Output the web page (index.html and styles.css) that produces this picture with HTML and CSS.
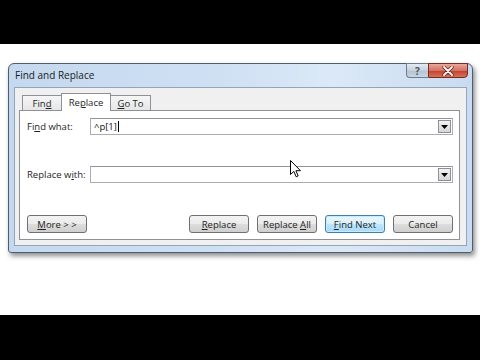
FILE: index.html
```html
<!DOCTYPE html>
<html>
<head>
<meta charset="utf-8">
<link rel="stylesheet" href="styles.css">
</head>
<body>
<div class="bar"></div>
<div class="stage">
  <div class="dialog">
    <div class="titlebar">
      <span class="title">Find and Replace</span>
      <div class="caption-btns">
        <div class="cap help">?</div>
        <div class="cap close">
          <svg width="12" height="10" viewBox="0 0 12 10"><path d="M2 1 L10 9 M10 1 L2 9" stroke="#5a1a14" stroke-width="3.2" stroke-linecap="round"/><path d="M2 1 L10 9 M10 1 L2 9" stroke="#fff" stroke-width="1.8" stroke-linecap="round"/></svg>
        </div>
      </div>
    </div>
    <div class="client">
      <div class="tabs">
        <div class="tab"><span>Fin<u>d</u></span></div>
        <div class="tab active"><span>Re<u>p</u>lace</span></div>
        <div class="tab"><span><u>G</u>o To</span></div>
      </div>
      <div class="panel">
        <div class="row">
          <span class="label">Fi<u>n</u>d what:</span>
          <div class="combo"><span class="value">^p[1]</span><span class="caret"></span><div class="drop"><svg width="7" height="4" viewBox="0 0 7 4"><path d="M0 0 H7 L3.5 4 Z" fill="#000"/></svg></div></div>
        </div>
        <div class="row row2">
          <span class="label">Replace w<u>i</u>th:</span>
          <div class="combo"><span class="value"></span><div class="drop"><svg width="7" height="4" viewBox="0 0 7 4"><path d="M0 0 H7 L3.5 4 Z" fill="#000"/></svg></div></div>
        </div>
        <div class="buttons">
          <div class="btn"><span><u>M</u>ore &gt; &gt;</span></div>
          <div class="spacer"></div>
          <div class="btn"><span><u>R</u>eplace</span></div>
          <div class="btn"><span>Replace <u>A</u>ll</span></div>
          <div class="btn default"><span><u>F</u>ind Next</span></div>
          <div class="btn"><span>Cancel</span></div>
        </div>
      </div>
    </div>
  </div>
  <svg class="cursor" width="12" height="18" viewBox="0 0 12 18"><path d="M0.5 0.5 L0.5 14.5 L3.8 11.4 L6.2 16.8 L8.2 15.9 L5.9 10.7 L10.5 10.7 Z" fill="#fff" stroke="#000" stroke-width="1" stroke-linejoin="round"/></svg>
</div>
<div class="bar bottom"></div>
</body>
</html>
```
FILE: styles.css
```css
html, body {
  margin: 0;
  padding: 0;
  background: #fff;
}
body {
  width: 480px;
  height: 360px;
  overflow: hidden;
  font-family: "Open Sans", "Noto Sans", sans-serif;
  font-size: 9.5px;
  color: #1e1e1e;
}
u { text-decoration: underline; text-underline-offset: 1px; }
.bar {
  height: 44px;
  background: #000;
}
.bar.bottom { height: 45px; }
.stage {
  position: relative;
  height: 271px;
  padding-top: 19px;
  padding-left: 8px;
  box-sizing: border-box;
}
.dialog {
  width: 465px;
  height: 190px;
  box-sizing: border-box;
  border: 1px solid #4d5d70;
  border-radius: 6px 6px 3px 3px;
  background: linear-gradient(90deg, #c4d8ef 0%, #cfe0f3 45%, #dbe9f7 70%, #c9dbef 100%);
  box-shadow: 2px 3px 5px rgba(0,0,0,0.45);
  display: flex;
  flex-direction: column;
}
.titlebar {
  height: 23px;
  display: flex;
  align-items: flex-start;
  justify-content: space-between;
}
.title {
  margin-left: 6px;
  margin-top: 4px;
  font-size: 10px;
  color: #1a1a1a;
}
.caption-btns {
  display: flex;
  margin-right: 4px;
  margin-top: -1px;
}
.cap {
  height: 15px;
  box-sizing: border-box;
  border: 1px solid #6f7b8a;
  display: flex;
  align-items: center;
  justify-content: center;
}
.help {
  width: 22px;
  border-radius: 0 0 0 4px;
  border-right: none;
  background: linear-gradient(#e4ebf3, #c5d0dd 50%, #b3c1d1 51%, #c9d6e4);
  color: #4a5566;
  font-weight: bold;
  font-size: 10px;
}
.close {
  width: 40px;
  border-color: #7a2b22;
  border-radius: 0 0 4px 0;
  background: linear-gradient(#e8a89b, #d57264 50%, #c2402f 51%, #d47257);
}
.client {
  flex: 1;
  margin: 0 5px 6px 5px;
  border: 1px solid #95a5b9;
  background: #f0f0f0;
  padding: 5px 6px 5px 4px;
  display: flex;
  flex-direction: column;
}
.tabs {
  display: flex;
  align-items: flex-end;
  padding-left: 3px;
  height: 17px;
  position: relative;
  z-index: 1;
}
.tab {
  height: 15px;
  box-sizing: border-box;
  border: 1px solid #8e9197;
  border-bottom: none;
  background: linear-gradient(#f6f6f6, #e6e6e6);
  display: flex;
  align-items: center;
  justify-content: center;
  padding-top: 1px;
}
.tab:nth-child(1) { width: 40px; }
.tab:nth-child(3) { width: 41px; }
.tab.active {
  width: 50px;
  height: 18px;
  margin: 0 -1px -1px;
  background: #fff;
  padding-bottom: 1px;
}
.panel {
  flex: 1;
  border: 1px solid #8e9197;
  background: #fff;
  padding: 7px 6px 6px 7px;
  display: flex;
  flex-direction: column;
}
.row {
  display: flex;
  align-items: center;
  height: 17px;
}
.row2 { margin-top: 31px; }
.label {
  width: 63px;
  flex: none;
  color: #1e1e1e;
}
.combo {
  flex: 1;
  height: 17px;
  box-sizing: border-box;
  border: 1px solid #abadb3;
  border-top-color: #8f939c;
  display: flex;
  align-items: center;
  padding-left: 3px;
  position: relative;
}
.value { font-size: 9.5px; color: #111; }
.caret {
  width: 1px;
  height: 11px;
  background: #000;
  margin-left: 1px;
}
.drop {
  position: absolute;
  right: 1px;
  top: 1px;
  width: 13px;
  height: 13px;
  box-sizing: border-box;
  border: 1px solid #8b8f96;
  background: linear-gradient(#f2f2f2, #d6d6d6);
  display: flex;
  align-items: center;
  justify-content: center;
}
.buttons {
  display: flex;
  margin-top: 32px;
  gap: 8px;
}
.spacer { flex: 1; }
.btn {
  width: 60px;
  height: 18px;
  box-sizing: border-box;
  border: 1px solid #707070;
  border-radius: 3px;
  background: linear-gradient(#f3f3f3, #ebebeb 50%, #dddddd 51%, #cfcfcf);
  display: flex;
  align-items: center;
  justify-content: center;
  color: #1e1e1e;
}
.btn.default {
  border-color: #3c7fb1;
  background: linear-gradient(#eaf6fd, #d9f0fc 50%, #bee6fd 51%, #a7d9f5);
  box-shadow: inset 0 0 0 1px #c8eaff;
}
.cursor {
  position: absolute;
  left: 290px;
  top: 116px;
}
```
